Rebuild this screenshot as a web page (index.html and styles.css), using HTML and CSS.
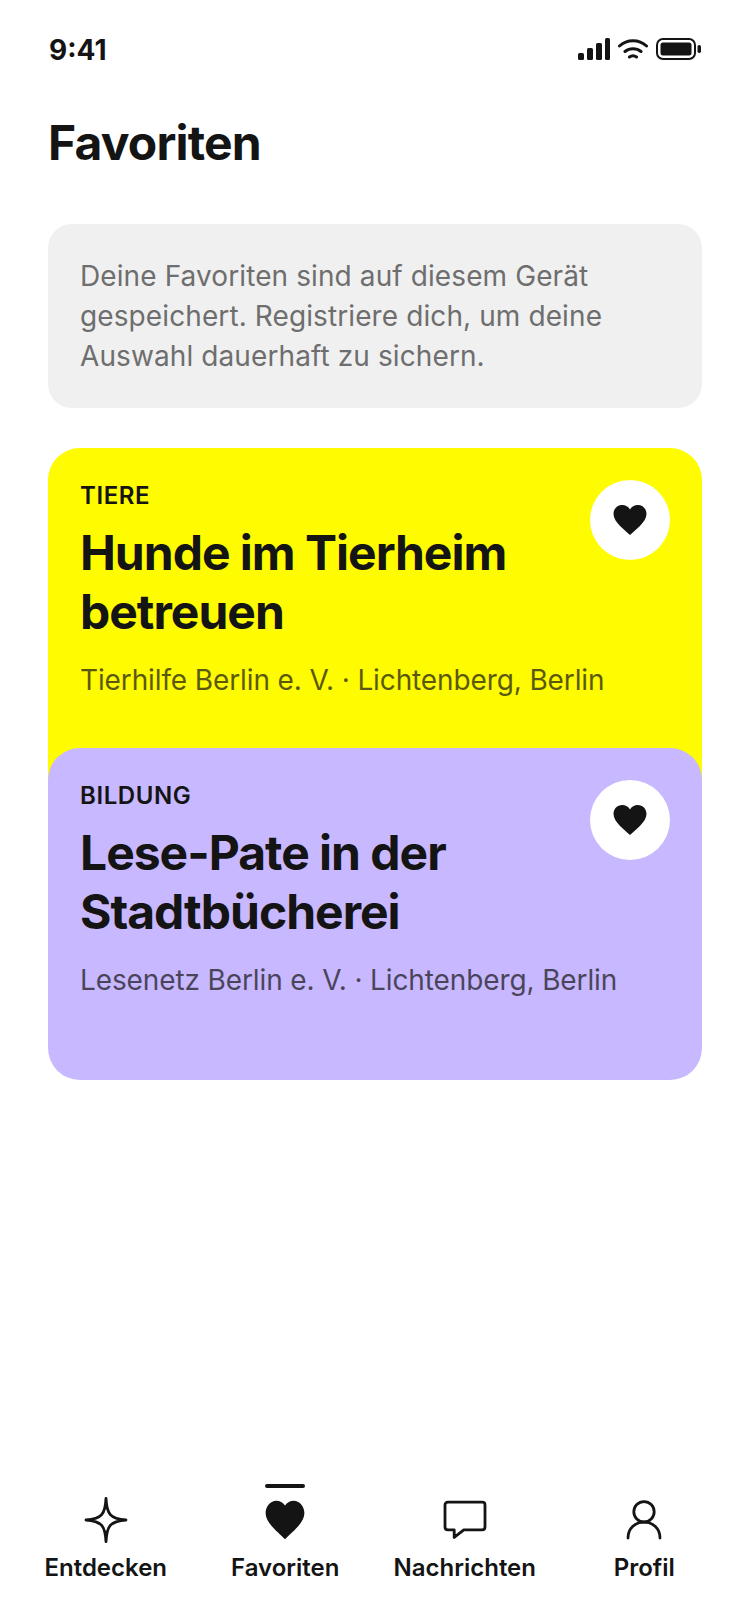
FILE: index.html
```html
<!DOCTYPE html>
<html lang="de">
<head>
<meta charset="utf-8">
<title>Favoriten</title>
<link rel="stylesheet" href="styles.css">
</head>
<body>
<div class="screen">
  <header class="status">
    <span class="time">9:41</span>
    <div class="status-icons">
      <svg width="32" height="22" viewBox="0 0 32 22"><rect x="0" y="15" width="6" height="7" rx="1.500"/><rect x="9" y="10" width="6" height="12" rx="1.500"/><rect x="18" y="5" width="6" height="17" rx="1.500"/><rect x="27" y="0" width="5" height="22" rx="1.500"/></svg>
      <svg class="wifi" width="30" height="22" viewBox="0 0 30 22"><path d="M1.500 8C9 1 21 1 28.500 8M7 13.500C11.500 9.800 18.500 9.800 23 13.500M11.500 19C13.500 17.500 16.500 17.500 18.500 19"/></svg>
      <svg width="46" height="22" viewBox="0 0 46 22"><rect x="1" y="1" width="38" height="20" rx="6" class="batt-o"/><rect x="4.500" y="4.500" width="31" height="13" rx="2.500"/><rect x="41.500" y="7" width="3.500" height="8" rx="1.700"/></svg>
    </div>
  </header>

  <main class="content">
    <h1 class="title">Favoriten</h1>
    <p class="notice">Deine Favoriten sind auf diesem Gerät gespeichert. Registriere dich, um deine Auswahl dauerhaft zu sichern.</p>

    <div class="cards">
      <article class="card card-yellow">
        <div class="cat">TIERE</div>
        <h2 class="card-title">Hunde im Tierheim betreuen</h2>
        <p class="meta">Tierhilfe Berlin e. V. · Lichtenberg, Berlin</p>
        <button class="fav" aria-label="Favorit"><svg width="36" height="36" viewBox="0 0 24 24"><path d="M12 22C9 19 1 13.500 1 8 1 4.500 3.500 2 6.800 2 9 2 11 3 12 5 13 3 15 2 17.200 2 20.500 2 23 4.500 23 8 23 13.500 15 19 12 22Z"/></svg></button>
      </article>
      <article class="card card-violet">
        <div class="cat">BILDUNG</div>
        <h2 class="card-title">Lese-Pate in der Stadtbücherei</h2>
        <p class="meta">Lesenetz Berlin e. V. · Lichtenberg, Berlin</p>
        <button class="fav" aria-label="Favorit"><svg width="36" height="36" viewBox="0 0 24 24"><path d="M12 22C9 19 1 13.500 1 8 1 4.500 3.500 2 6.800 2 9 2 11 3 12 5 13 3 15 2 17.200 2 20.500 2 23 4.500 23 8 23 13.500 15 19 12 22Z"/></svg></button>
      </article>
    </div>
  </main>

  <nav class="tabs">
    <div class="tab">
      <svg class="ico-line" width="48" height="48" viewBox="0 0 24 24"><path d="M12 1.200C12.400 9 14 11.400 22 12 14 12.600 12.400 15 12 22.800 11.600 15 10 12.600 2 12 10 11.400 11.600 9 12 1.200Z"/></svg>
      <span class="tab-label">Entdecken</span>
    </div>
    <div class="tab tab-active">
      <svg class="ico-fill" width="48" height="48" viewBox="0 0 24 24"><path d="M12 21.600C9 18.500 2.300 13.500 2.300 8.600 2.300 5 5 2.400 7.600 2.400 9.400 2.400 11 3.200 12 4.800 13 3.200 14.600 2.400 16.400 2.400 19 2.400 21.700 5 21.700 8.600 21.700 13.500 15 18.500 12 21.600Z"/></svg>
      <span class="tab-label">Favoriten</span>
    </div>
    <div class="tab">
      <svg class="ico-line" width="48" height="48" viewBox="0 0 24 24"><path d="M3.400 3.100H20.600C21.400 3.100 22 3.700 22 4.500V15.500C22 16.300 21.400 16.900 20.600 16.900H11.400L6.600 20.700V16.900H3.400C2.600 16.900 2 16.300 2 15.500V4.500C2 3.700 2.600 3.100 3.400 3.100Z"/></svg>
      <span class="tab-label">Nachrichten</span>
    </div>
    <div class="tab">
      <svg class="ico-line" width="48" height="48" viewBox="0 0 24 24"><circle cx="12" cy="7.900" r="5.100"/><path d="M4 21C4 16.200 7.500 13.100 12 13.100 16.500 13.100 20 16.200 20 21"/></svg>
      <span class="tab-label">Profil</span>
    </div>
  </nav>
</div>
</body>
</html>
```

FILE: styles.css
```css
* { box-sizing: border-box; }
html, body { margin: 0; padding: 0; background: #fff; }
body { font-family: Inter, "Liberation Sans", sans-serif; color: #141414; }
.screen { width: 750px; height: 1624px; display: flex; flex-direction: column; overflow: hidden; }

.status { display: flex; justify-content: space-between; align-items: center; height: 100px; padding: 0 48px; }
.time { font-size: 28px; font-weight: 700; line-height: 34px; padding-left: 1px; }
.status-icons { display: flex; align-items: center; gap: 8px; padding-bottom: 2px; }
.status-icons svg { display: block; fill: #141414; }
.status-icons .wifi { fill: none; }
.wifi path { fill: none; stroke: #141414; stroke-width: 3; stroke-linecap: round; }
.batt-o { fill: none; stroke: #141414; stroke-width: 2; }

.content { padding: 0 48px; }
.title { margin: 15px 0 0; font-size: 48px; line-height: 56px; font-weight: 700; letter-spacing: -0.84px; }
.notice { margin: 53px 0 0; padding: 32px; background: #f0f0f0; border-radius: 24px; font-size: 28px; line-height: 40px; color: #6e6e6e; letter-spacing: 0.1px; }

.cards { margin-top: 40px; display: flex; flex-direction: column; }
.card { position: relative; border-radius: 32px; padding: 32px; height: 332px; }
.card-yellow { background: #fffb00; height: 364px; }
.card-violet { background: #c8b8ff; margin-top: -64px; }
.cat { margin-top: 2px; font-size: 24px; line-height: 28px; font-weight: 600; letter-spacing: 0.6px; }
.card-title { margin: 13px 0 0; font-size: 48px; line-height: 59px; font-weight: 700; letter-spacing: -1px; max-width: 480px; }
.meta { margin: 19px 0 0; font-size: 28px; line-height: 40px; color: #141414; opacity: 0.7; letter-spacing: -0.12px; }
.fav { position: absolute; top: 32px; right: 32px; width: 80px; height: 80px; border: 0; padding: 0; border-radius: 50%; background: #fff; display: flex; align-items: center; justify-content: center; }
.fav svg { fill: #141414; display: block; }

.tabs { margin-top: auto; display: grid; grid-template-columns: repeat(4, 1fr); padding: 0 16px 37px; }
.tab { position: relative; display: flex; flex-direction: column; align-items: center; gap: 5px; }
.tab svg { display: block; }
.ico-line { fill: none; stroke: #141414; stroke-width: 1.400; stroke-linejoin: round; stroke-linecap: round; }
.ico-fill { fill: #141414; }
.tab-label { font-size: 24px; line-height: 38px; font-weight: 600; white-space: nowrap; }
.tab-active::before { content: ""; position: absolute; top: -12px; left: 50%; width: 40px; height: 4px; margin-left: -20px; border-radius: 2px; background: #141414; }
```
